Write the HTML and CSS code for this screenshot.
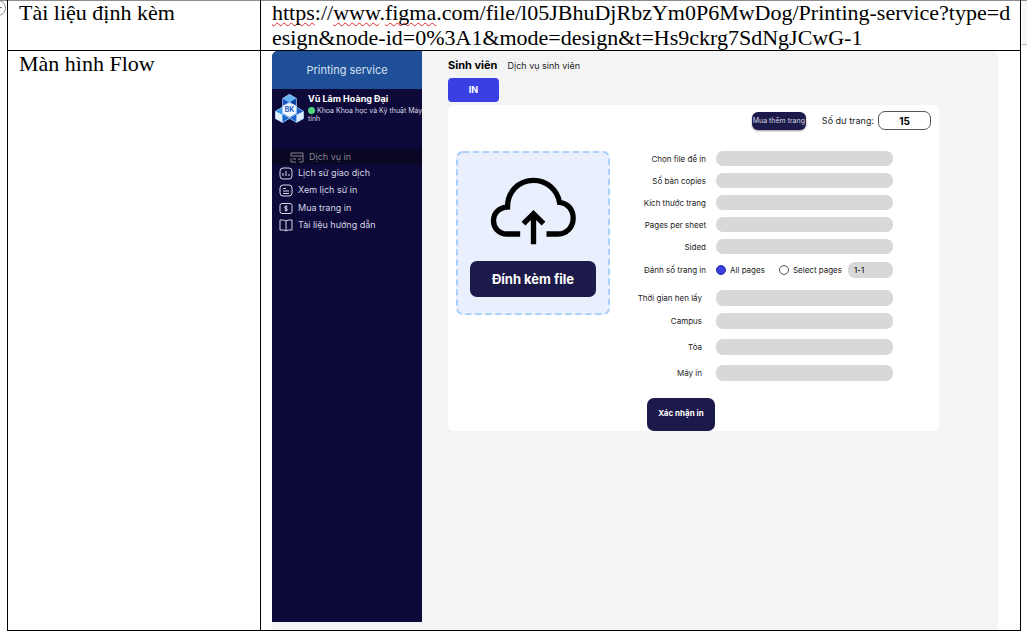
FILE: index.html
```html
<!DOCTYPE html>
<html lang="vi">
<head>
<meta charset="utf-8">
<title>Printing service</title>
<link rel="stylesheet" href="styles.css">
</head>
<body>
<span class="handle">-</span>
<span class="edge"></span>
<table class="doc">
  <tr class="doc-link">
    <th scope="row">Tài liệu định kèm</th>
    <td><span class="typo">https</span>://<span class="typo">www</span>.<span class="typo">figma</span>.com/file/l05JBhuDjRbzYm0P6MwDog/Printing-service?type=design&amp;node-id=0%3A1&amp;mode=design&amp;t=Hs9ckrg7SdNgJCwG-1</td>
  </tr>
  <tr class="doc-flow">
    <th scope="row">Màn hình Flow</th>
    <td>
      <div class="app">
        <aside class="sidebar">
          <div class="brand">Printing service</div>
          <div class="profile">
            <svg class="logo" viewBox="0 0 84 84" aria-label="BK">
              <path d="M42 1 62 13V37L42 49 22 37V13Z" fill="#1b57c4"/>
              <path d="M42 1 62 13 42 25 22 13Z" fill="#65b2f3"/>
              <path d="M42 25 62 13V37L42 49Z" fill="#0a3d9e"/>
              <path d="M22 38 42 50V72L22 83 1 72V50Z" fill="#3d95ea"/>
              <path d="M1 50 22 60V83L1 72Z" fill="#e4f2ff"/>
              <path d="M22 60 42 50V72L22 83Z" fill="#1760c9"/>
              <path d="M62 38 83 50V72L62 83 42 72V50Z" fill="#1760c9"/>
              <path d="M62 60 83 50V72L62 83Z" fill="#dceeff"/>
              <path d="M22 34 42 24 62 34V56L42 67 22 56Z" fill="#eef7ff"/>
              <path d="M1 50 22 38V58L42 70 22 82 1 70ZM83 50 62 38V58L42 70 62 82 83 70ZM42 1 22 13V38L42 26 62 38V13Z" fill="none" stroke="#b9dcfb" stroke-width="2"/>
              <text x="42" y="53" text-anchor="middle" class="logo-text">BK</text>
            </svg>
            <div class="who">
              <div class="name">Vũ Lâm Hoàng Đại</div>
              <div class="dept"><i class="dot"></i>Khoa Khoa học và Kỹ thuật Máy tính</div>
            </div>
          </div>
          <nav class="menu">
            <a href="#" class="active"><svg viewBox="0 0 14 13"><path d="M1 5V2H13V11H9M1 5H13M1 7V11H6M3 8H6M8 8H11"/></svg>Dịch vụ in</a>
            <a href="#"><svg viewBox="0 0 14 13"><rect x="1" y="1" width="12" height="11" rx="3"/><path d="M4 6V9M7 4V9M10 7V9"/></svg>Lịch sử giao dịch</a>
            <a href="#" class="spaced"><svg viewBox="0 0 14 13"><rect x="1" y="1" width="12" height="11" rx="3"/><path d="M4 4.500H7M4 7H10M4 9.500H10"/></svg>Xem lịch sử in</a>
            <a href="#" class="spaced"><svg viewBox="0 0 14 13"><rect x="1" y="1.500" width="12" height="10" rx="2"/><path d="M8.500 5C8 4 5.500 4 5.500 5.300 5.500 6.700 8.500 6.200 8.500 7.700 8.500 9 6 9 5.500 8M7 3.500V9.500"/></svg>Mua trang in</a>
            <a href="#"><svg viewBox="0 0 14 13"><path d="M7 2C6 1 4 1 1 1V11C4 11 6 11 7 12 8 11 10 11 13 11V1C10 1 8 1 7 2ZM7 2V12"/></svg>Tài liệu hướng dẫn</a>
          </nav>
        </aside>
        <main class="main">
          <header class="head"><h1>Sinh viên</h1><span>Dịch vụ sinh viên</span></header>
          <button type="button" class="tab">IN</button>
          <form class="card">
            <div class="balance">
              <button type="button" class="buy">Mua thêm trang</button>
              <label for="balance">Số dư trang:</label>
              <input id="balance" value="15" readonly>
            </div>
            <div class="body">
              <div class="upload">
                <svg class="dashes"><rect x="1" y="1" rx="6"/></svg>
                <svg class="cloud" viewBox="124 97 260 204"><path d="M214 268H174C151 268 134 250 134 228 134 206 151 188 176 187 176 143 208 107 254 107 294 107 326 136 332 173 358 176 373 196 373 220 373 248 353 268 328 268H293M254 299V206M224 237 254 207 284 237"/></svg>
                <button type="button" class="attach">Đính kèm file</button>
              </div>
              <div class="fields">
                <div class="row"><label for="f1">Chọn file để in</label><input id="f1"></div>
                <div class="row"><label for="f2">Số bản copies</label><input id="f2"></div>
                <div class="row"><label for="f3">Kích thước trang</label><input id="f3"></div>
                <div class="row"><label for="f4">Pages per sheet</label><input id="f4"></div>
                <div class="row"><label for="f5">Sided</label><input id="f5"></div>
                <div class="row pages" role="radiogroup" aria-labelledby="pg">
                  <span id="pg" class="caption">Đánh số trang in</span>
                  <div class="options">
                    <label><input type="radio" name="pages" checked>All pages</label>
                    <label><input type="radio" name="pages">Select pages</label>
                    <input class="range" value="1-1" aria-label="Select pages">
                  </div>
                </div>
                <div class="row tall pickup"><label for="f6">Thời gian hẹn lấy</label><input id="f6"></div>
                <div class="row tall"><label for="f7">Campus</label><input id="f7"></div>
                <div class="row tall loose"><label for="f8">Tòa</label><input id="f8"></div>
                <div class="row tall loose"><label for="f9">Máy in</label><input id="f9"></div>
                <button type="button" class="submit">Xác nhận in</button>
              </div>
            </div>
          </form>
        </main>
      </div>
    </td>
  </tr>
</table>
</body>
</html>
```
FILE: styles.css
```css
* { box-sizing: border-box; }
body {
  margin: 0;
  padding: 0 6px 5px 7px;
  background: #fff;
  box-shadow: inset 0 1px #8c8c8c;
  overflow: hidden;
  position: relative;
}
button, input { font: inherit; margin: 0; border: 0; padding: 0; }
.handle {
  position: absolute; left: -10px; top: 0;
  width: 16px; height: 16px;
  border: 1px solid #8c8c8c; border-radius: 8px;
  font: 12px/12px "Liberation Sans", sans-serif;
  text-align: right; padding-right: 3px; color: #555;
}
.edge {
  position: absolute; right: 0; top: 1px;
  width: 5px; height: 44px;
  background: #f7f7f7; border-bottom: 1px solid #b5b5b5;
}
.doc {
  width: 100%;
  table-layout: fixed;
  border-collapse: collapse;
  font: 22px/25px "Liberation Serif", serif;
  color: #000;
}
.doc th, .doc td {
  border: 1px solid #000;
  border-top: 0;
  vertical-align: top;
  text-align: left;
  font-weight: 400;
  padding: 0 11px;
}
.doc th { width: 253px; }
.doc-link td { word-break: break-all; padding-right: 7px; }
.doc-flow td { padding-right: 22px; }
.typo { text-decoration: underline wavy #e8262b 1px; text-underline-offset: 2px; text-decoration-skip-ink: none; }

.app {
  display: flex;
  min-height: 579px;
  background: #f4f4f4;
  border-radius: 6px 6px 0 0;
  font: 9px/12px Inter, sans-serif;
  color: #222;
}
.sidebar {
  flex: 0 0 150px;
  margin-bottom: 8px;
  background: #0d0a3a;
  border-radius: 6px 0 0 0;
  overflow: hidden;
  color: #d6d6e2;
}
.brand {
  height: 38px;
  background: #1f5097;
  color: #d4e0f2;
  font-size: 11px; line-height: 38px;
  text-align: center;
}
.profile { display: flex; gap: 4px; padding: 4px 0 0 3px; height: 60px; }
.logo { flex: 0 0 29px; height: 29px; margin-top: 1px; }
.logo-text { font: 700 20px Inter, sans-serif; fill: #1b57c4; }
.who { flex: 1; margin-right: -6px; }
.name { font-weight: 700; color: #fff; font-size: 9px; line-height: 12px; }
.dept { font-size: 7px; line-height: 8px; margin-top: 2px; }
.dot {
  display: inline-block; width: 7px; height: 7px;
  border-radius: 50%; background: #4fd67f;
  margin-right: 2px; vertical-align: -1px;
}
.menu { display: flex; flex-direction: column; }
.menu a {
  display: flex; align-items: center; gap: 5px;
  height: 16px; padding-left: 7px;
  color: inherit; text-decoration: none;
}
.menu .spaced { height: 18px; }
.menu .active { background: #090724; color: #85858f; padding-left: 18px; }
.menu svg { width: 14px; height: 13px; fill: none; stroke: currentColor; stroke-width: 1; }

.main { flex: 1; min-width: 0; padding: 5px 59px 0 26px; }
.head { display: flex; align-items: baseline; gap: 10px; }
.head h1 { margin: 0; font-size: 11px; line-height: 18px; font-weight: 700; color: #000; }
.tab {
  display: block; width: 51px; height: 24px; margin: 4px 0 3px;
  border-radius: 4px; background: #3a3fe4; color: #fff;
  font-weight: 700;
}
.card { background: #fff; border-radius: 6px; padding: 6px 8px 0; }
.balance { display: flex; justify-content: flex-end; align-items: center; }
.buy {
  width: 54px; height: 18px; border-radius: 6px;
  background: #1c1a4a; color: #d6d6e2;
  font-size: 7px; white-space: nowrap;
  box-shadow: 0 1px 2px #0006;
}
.balance label { margin: 0 4px 0 16px; }
.balance input {
  width: 53px; height: 19px;
  border: 1px solid #555; border-radius: 7px;
  text-align: center; font-weight: 700; font-size: 10px; color: #000;
}
.body { display: flex; align-items: flex-start; padding-top: 21px; }
.upload {
  position: relative;
  flex: 0 0 154px; height: 164px;
  display: flex; flex-direction: column; align-items: center;
  padding-top: 26px; gap: 16px;
  background: #e9effd; border-radius: 7px;
}
.dashes { position: absolute; inset: 0; width: 100%; height: 100%; overflow: visible; pointer-events: none; }
.dashes rect {
  width: calc(100% - 2px); height: calc(100% - 2px);
  fill: none; stroke: #a9cffb; stroke-width: 2; stroke-dasharray: 6 4;
}
.cloud { width: 87px; height: 68px; fill: none; stroke: #000; stroke-width: 16; }
.attach {
  width: 126px; height: 36px; border-radius: 7px;
  background: #1c1a4a; color: #fff;
  font-size: 13px; font-weight: 700;
}
.fields { flex: 1; font-size: 8px; color: #222; }
.row {
  display: grid; grid-template-columns: 96px 177px; column-gap: 10px;
  align-items: center; height: 15px; margin-bottom: 7px;
}
.row > label, .caption { text-align: right; white-space: nowrap; }
.row > input, .range { height: 100%; min-width: 0; border-radius: 7px; background: #d8d8d8; padding: 0 6px; }
.pages { height: 16px; margin-top: 8px; }
.options { display: flex; align-items: center; height: 16px; }
.options label { display: flex; align-items: center; gap: 4px; margin-right: 14px; white-space: nowrap; }
.options label + label { margin-right: 0; }
.options input[type="radio"] {
  appearance: none; width: 10px; height: 10px;
  border: 1px solid #555; border-radius: 50%; background: #fff;
}
.options input[type="radio"]:checked { background: #3a3fe4; border-color: #2a2a9a; }
.range { width: 45px; margin-left: auto; }
.tall { height: 16px; }
.tall > label { padding-right: 4px; }
.pickup { margin-top: 12px; }
.loose { margin-top: 10px; margin-bottom: 10px; }
.submit {
  display: block; width: 68px; height: 33px; margin: 17px 0 0 37px;
  padding-bottom: 3px;
  border-radius: 7px; background: #1c1a4a; color: #fff;
  font-weight: 700; font-size: 8px; white-space: nowrap;
}
```
